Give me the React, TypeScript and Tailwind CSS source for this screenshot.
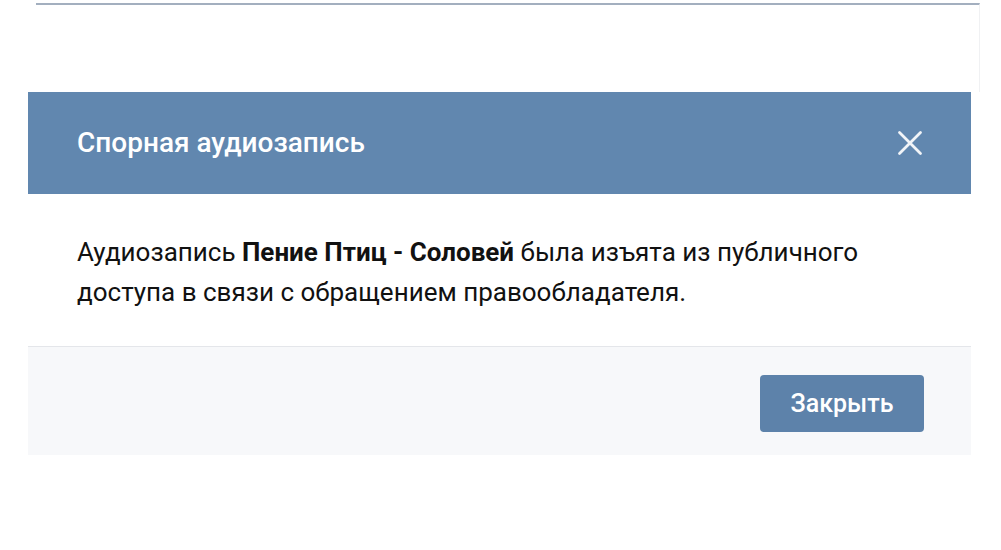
import React from 'react';

const CloseIcon = () => (
  <svg width="26" height="26" viewBox="0 0 26 26" fill="none">
    <path d="M2.5 2.5L23.5 23.5M23.5 2.5L2.5 23.5" stroke="#f1f4f8" strokeWidth="2.8" strokeLinecap="round" />
  </svg>
);

export default function App() {
  return (
    <div className="w-[1001px] h-[550px] bg-white font-['Roboto','Liberation_Sans',sans-serif] overflow-hidden">
      {/* page behind */}
      <div className="ml-[36px] mt-[3px] w-[944px] h-[89px] border-t-2 border-r border-t-[#a3afbf] border-r-[#f0f1f3]" />

      {/* Modal */}
      <div className="ml-[28px] w-[943px]">
        <div className="h-[102px] bg-[#6187af] flex items-center justify-between pl-[49px] pr-[48px] shadow-[0_1px_0_#5677a0]">
          <span className="text-white text-[28px] font-medium">Спорная аудиозапись</span>
          <CloseIcon />
        </div>
        <div className="h-[152px] bg-white pl-[49px] pr-[40px] pt-[38px] text-[26px] leading-[40px] text-[#111]">
          Аудиозапись <b className="font-bold">Пение Птиц - Соловей</b> была изъята из публичного
          <br />
          доступа в связи с обращением правообладателя.
        </div>
        <div className="border-t border-[#e4e6ea] bg-[#f7f8fa] h-[109px] flex justify-end items-start pt-[28px] pr-[47px]">
          <button className="w-[164px] h-[57px] rounded-[4px] bg-[#5d82aa] text-white text-[25px] font-medium">
            Закрыть
          </button>
        </div>
      </div>
    </div>
  );
}
